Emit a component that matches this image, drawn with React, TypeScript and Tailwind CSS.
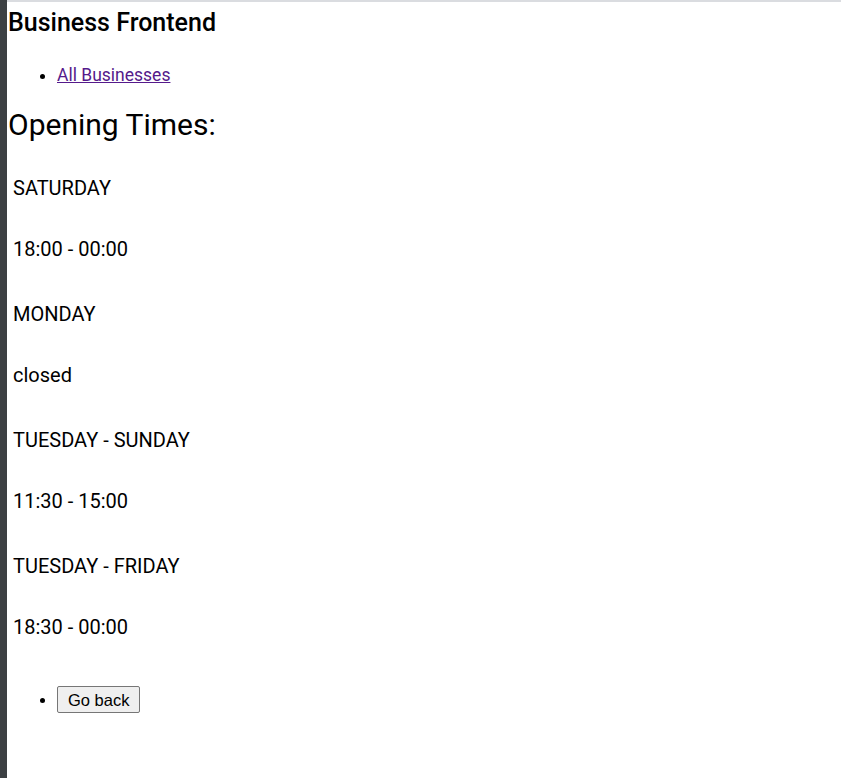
const hours = [
  { day: "SATURDAY", time: "18:00 - 00:00" },
  { day: "MONDAY", time: "closed" },
  { day: "TUESDAY - SUNDAY", time: "11:30 - 15:00" },
  { day: "TUESDAY - FRIDAY", time: "18:30 - 00:00" },
];

export default function App() {
  return (
    <div className="flex min-h-[778px] w-full bg-white font-['Roboto',sans-serif] text-black">
      <div className="w-[7px] shrink-0 bg-[#3c4043]" />
      <div className="flex-1 border-t-2 border-[#dadce0] pl-px">
        <h2 className="mt-[7px] text-[25px] font-medium leading-[28px]">
          Business Frontend
        </h2>
        <ul className="mt-[27px] list-disc pl-[49px] text-[17.5px] leading-[22px]">
          <li>
            <a href="#" className="text-[#551a8b] underline">
              All Businesses
            </a>
          </li>
        </ul>
        <h3 className="mt-[23px] text-[30px] font-normal leading-[32px]">
          Opening Times:
        </h3>
        <div className="mt-[36px] flex flex-col gap-[43px] pl-[5px] text-[20px] leading-[22px]">
          {hours.map((h) => (
            <div key={h.day} className="flex flex-col gap-[39px]">
              <p>{h.day}</p>
              <p>{h.time}</p>
            </div>
          ))}
        </div>
        <ul className="mt-[48px] list-disc pl-[49px]">
          <li>
            <button className="h-[27px] rounded-[2px] border border-[#767676] bg-[#efefef] px-[10px] font-['Liberation_Sans',Arial,sans-serif] text-[16.5px] leading-[20px]">
              Go back
            </button>
          </li>
        </ul>
      </div>
    </div>
  );
}
